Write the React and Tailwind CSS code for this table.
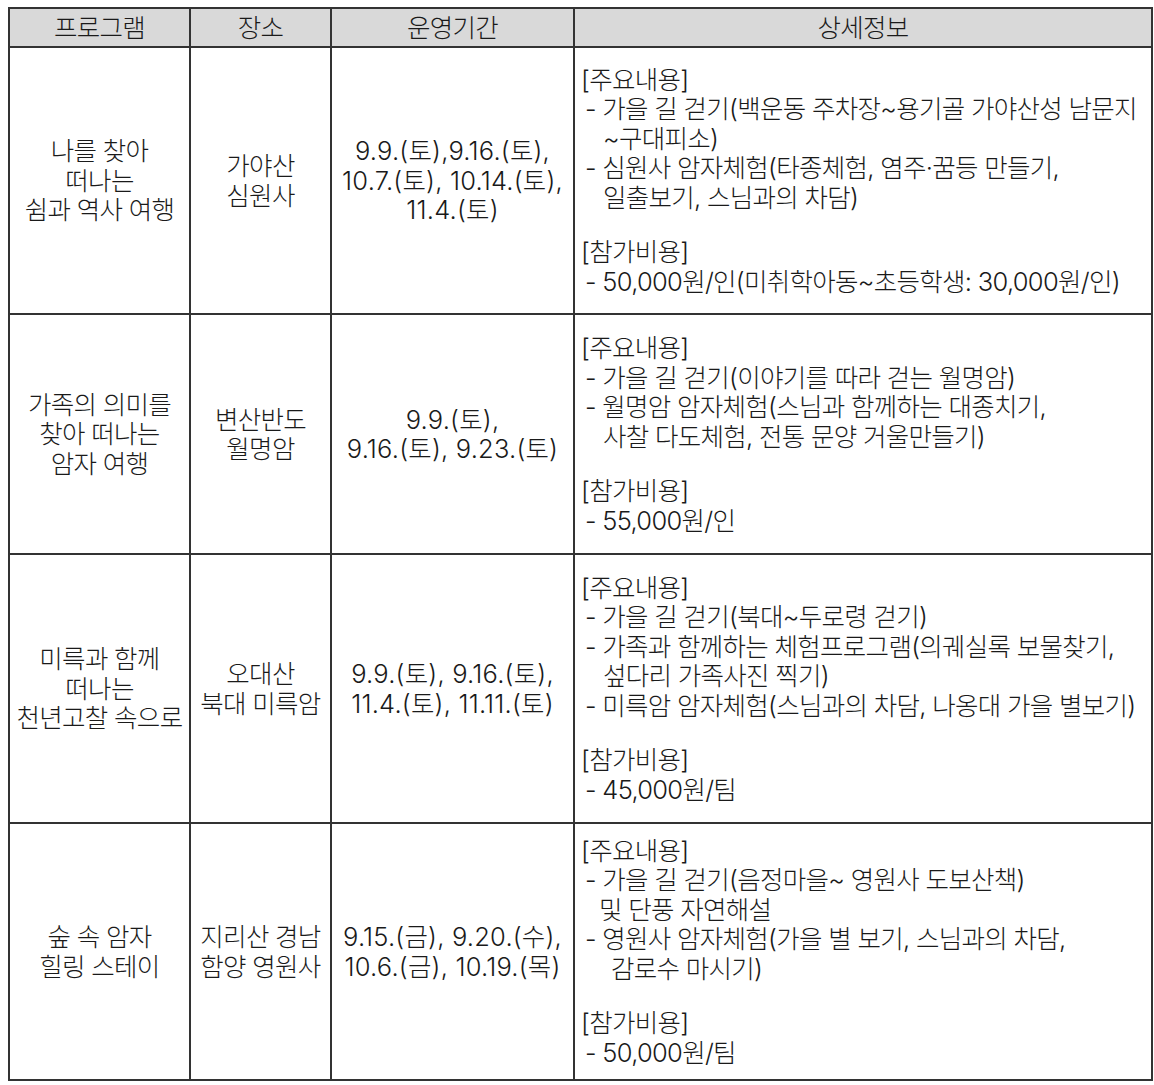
const rows = [
  {
    h: "h-[267px]",
    name: ["나를 찾아", "떠나는", "쉼과 역사 여행"],
    place: ["가야산", "심원사"],
    dates: ["9.9.(토),9.16.(토),", "10.7.(토), 10.14.(토),", "11.4.(토)"],
    main: [
      ["- 가을 길 걷기(백운동 주차장~용기골 가야산성 남문지", 0],
      ["~구대피소)", 18],
      ["- 심원사 암자체험(타종체험, 염주·꿈등 만들기,", 0],
      ["일출보기, 스님과의 차담)", 18],
    ],
    cost: "- 50,000원/인(미취학아동~초등학생: 30,000원/인)",
  },
  {
    h: "h-[240px]",
    name: ["가족의 의미를", "찾아 떠나는", "암자 여행"],
    place: ["변산반도", "월명암"],
    dates: ["9.9.(토),", "9.16.(토), 9.23.(토)"],
    main: [
      ["- 가을 길 걷기(이야기를 따라 걷는 월명암)", 0],
      ["- 월명암 암자체험(스님과 함께하는 대종치기,", 0],
      ["사찰 다도체험, 전통 문양 거울만들기)", 18],
    ],
    cost: "- 55,000원/인",
  },
  {
    h: "h-[269px]",
    name: ["미륵과 함께", "떠나는", "천년고찰 속으로"],
    place: ["오대산", "북대 미륵암"],
    dates: ["9.9.(토), 9.16.(토),", "11.4.(토), 11.11.(토)"],
    main: [
      ["- 가을 길 걷기(북대~두로령 걷기)", 0],
      ["- 가족과 함께하는 체험프로그램(의궤실록 보물찾기,", 0],
      ["섶다리 가족사진 찍기)", 18],
      ["- 미륵암 암자체험(스님과의 차담, 나옹대 가을 별보기)", 0],
    ],
    cost: "- 45,000원/팀",
  },
  {
    h: "h-[257px]",
    name: ["숲 속 암자", "힐링 스테이"],
    place: ["지리산 경남", "함양 영원사"],
    dates: ["9.15.(금), 9.20.(수),", "10.6.(금), 10.19.(목)"],
    main: [
      ["- 가을 길 걷기(음정마을~ 영원사 도보산책)", 0],
      ["및 단풍 자연해설", 14],
      ["- 영원사 암자체험(가을 별 보기, 스님과의 차담,", 0],
      ["감로수 마시기)", 26],
    ],
    cost: "- 50,000원/팀",
  },
];

const cell = "border-2 border-[#333] align-middle";

export default function App() {
  return (
    <div
      className="bg-white w-[1154px] h-[1085px] pt-[7px] pl-[8px] text-[#1a1a1a] font-light"
      style={{ fontFamily: 'Inter, "Noto Sans CJK KR", "Noto Sans", sans-serif' }}
    >
      <table className="border-collapse table-fixed w-[1143px] text-[25.5px] leading-[29.5px] tracking-[-0.7px]">
        <colgroup>
          <col className="w-[181px]" />
          <col className="w-[141px]" />
          <col className="w-[243px]" />
          <col className="w-[578px]" />
        </colgroup>
        <thead>
          <tr className="h-[39px] bg-[#d9d9d9]">
            <th className={`${cell} font-light text-center`}>프로그램</th>
            <th className={`${cell} font-light text-center`}>장소</th>
            <th className={`${cell} font-light text-center`}>운영기간</th>
            <th className={`${cell} font-light text-center`}>상세정보</th>
          </tr>
        </thead>
        <tbody>
          {rows.map((r, i) => (
            <tr key={i} className={r.h}>
              <td className={`${cell} text-center`}>
                {r.name.map((t) => (
                  <div key={t}>{t}</div>
                ))}
              </td>
              <td className={`${cell} text-center`}>
                {r.place.map((t) => (
                  <div key={t}>{t}</div>
                ))}
              </td>
              <td className={`${cell} text-center tracking-[0.2px] whitespace-nowrap`}>
                {r.dates.map((t) => (
                  <div key={t}>{t}</div>
                ))}
              </td>
              <td className={`${cell} pl-[6px] whitespace-nowrap`}>
                <div>[주요내용]</div>
                {r.main.map(([t, pad]) => (
                  <div key={t} style={{ paddingLeft: 4 + pad }}>
                    {t}
                  </div>
                ))}
                <div className="h-[25px]" />
                <div>[참가비용]</div>
                <div className="pl-[4px]">{r.cost}</div>
              </td>
            </tr>
          ))}
        </tbody>
      </table>
    </div>
  );
}
